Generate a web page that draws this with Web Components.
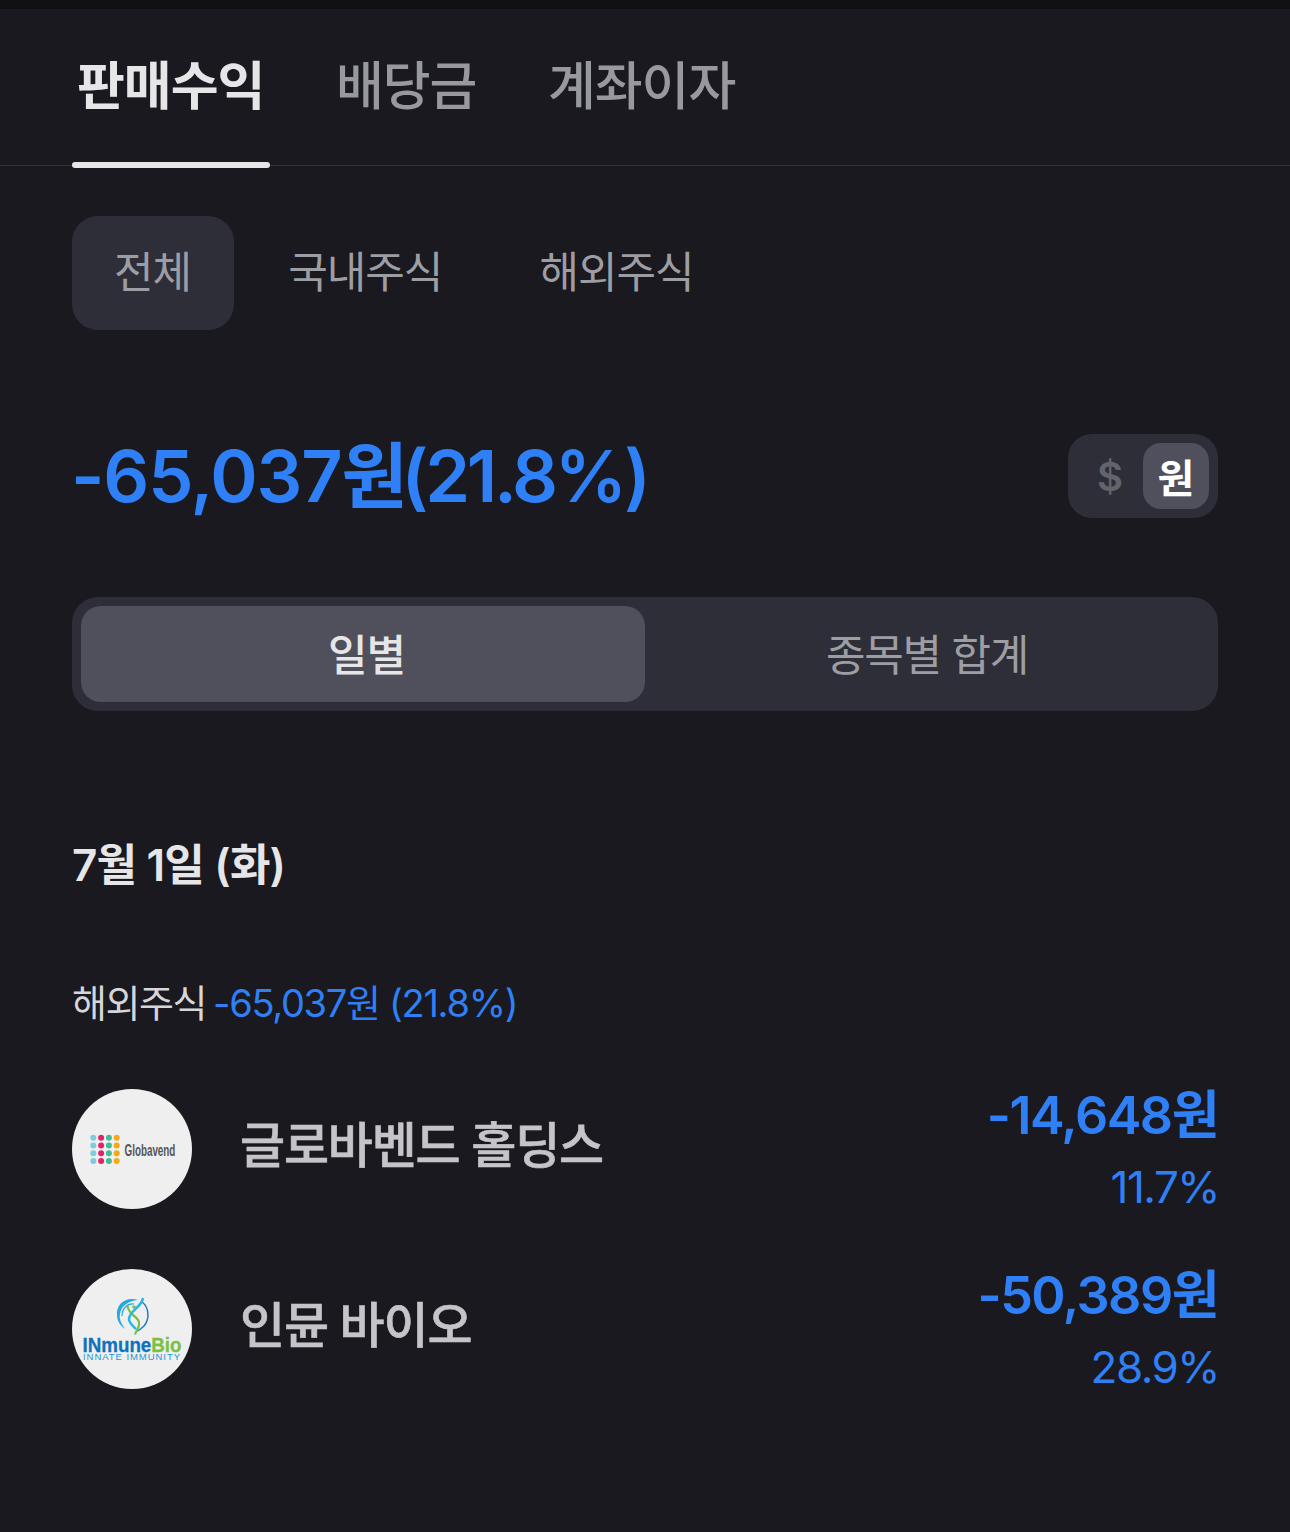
<!DOCTYPE html>
<html lang="ko">
<head>
<meta charset="utf-8">
<style>
  html, body { margin: 0; background: #19191f; }
  body {
    width: 1290px;
    height: 1532px;
    overflow: hidden;
    font-family: Inter, "Noto Sans CJK KR", sans-serif;
    --blue: #2f80f6;
  }
  .content { padding: 0 72px; display: block; }
</style>
</head>
<body>
<top-tabs></top-tabs>
<div class="content">
  <market-filter></market-filter>
  <profit-summary></profit-summary>
  <view-switch></view-switch>
  <day-section>
    <stock-row name="글로바벤드 홀딩스" amount="-14,648원" rate="11.7%" logo="globavend"></stock-row>
    <stock-row name="인뮨 바이오" amount="-50,389원" rate="28.9%" logo="inmune"></stock-row>
  </day-section>
</div>
<script>
class TopTabs extends HTMLElement {
  connectedCallback() {
    this.attachShadow({ mode: "open" }).innerHTML = `
      <style>
        :host { display: block; border-top: 9px solid #111114; }
        nav {
          display: flex;
          gap: 71.5px;
          height: 157px;
          padding: 0 77px;
          box-sizing: border-box;
          border-bottom: 1px solid #33333b;
        }
        a {
          position: relative;
          font-size: 52px;
          font-weight: 500;
          line-height: 150px;
          height: 150px;
          letter-spacing: -1px;
          color: #98989f;
        }
        a span { position: relative; top: 3px; }
        a.on { color: #e6e6e9; font-weight: 700; }
        a.on::after {
          content: "";
          position: absolute;
          left: -5px;
          right: -6px;
          top: 153px;
          height: 6px;
          border-radius: 3px;
          background: #e6e6e9;
        }
      </style>
      <nav>
        <a class="on"><span>판매수익</span></a>
        <a><span>배당금</span></a>
        <a><span>계좌이자</span></a>
      </nav>`;
  }
}

class MarketFilter extends HTMLElement {
  connectedCallback() {
    this.attachShadow({ mode: "open" }).innerHTML = `
      <style>
        :host { display: flex; gap: 12px; margin-top: 50px; }
        span {
          height: 114px;
          box-sizing: border-box;
          padding: 0 43px 8px 42px;
          display: flex;
          align-items: center;
          border-radius: 26px;
          font-size: 43px;
          letter-spacing: -1px;
          color: #9d9da4;
        }
        span.on { background: #2e2e38; }
      </style>
      <span class="on">전체</span><span>국내주식</span><span>해외주식</span>`;
  }
}

class ProfitSummary extends HTMLElement {
  connectedCallback() {
    this.attachShadow({ mode: "open" }).innerHTML = `
      <style>
        :host {
          display: flex;
          align-items: center;
          justify-content: space-between;
          margin-top: 104px;
          height: 84px;
        }
        strong {
          margin: 0 0 12px -1px;
          font-size: 72px;
          font-weight: 600;
          letter-spacing: -1.2px;
          color: var(--blue);
        }
        strong i { font-style: normal; letter-spacing: -3.2px; margin-left: -5px; }
        .unit {
          width: 150px;
          height: 84px;
          box-sizing: border-box;
          padding: 9px;
          display: flex;
          justify-content: flex-end;
          gap: 9px;
          border-radius: 24px;
          background: #2e2e38;
        }
        .unit b {
          display: flex;
          align-items: center;
          justify-content: center;
          height: 66px;
          font-size: 40px;
          font-weight: 600;
        }
        .usd { color: #63636c; width: 48px; }
        .krw { color: #fff; width: 66px; border-radius: 18px; background: #50505c; }
      </style>
      <strong>-65,037원<i>(21.8%)</i></strong>
      <div class="unit"><b class="usd">$</b><b class="krw">원</b></div>`;
  }
}

class ViewSwitch extends HTMLElement {
  connectedCallback() {
    this.attachShadow({ mode: "open" }).innerHTML = `
      <style>
        :host {
          display: grid;
          grid-template-columns: 1fr 1fr;
          margin-top: 79px;
          height: 114px;
          box-sizing: border-box;
          padding: 9px;
          border-radius: 26px;
          background: #2e2e38;
        }
        span {
          display: flex;
          align-items: center;
          justify-content: center;
          padding-bottom: 4px;
          border-radius: 20px;
          font-size: 43px;
          letter-spacing: -1.3px;
          color: #9d9da4;
        }
        span.on { background: #50505c; color: #e6e6e9; font-weight: 500; padding-left: 7px; letter-spacing: -1px; }
      </style>
      <span class="on">일별</span><span>종목별 합계</span>`;
  }
}

class DaySection extends HTMLElement {
  connectedCallback() {
    this.attachShadow({ mode: "open" }).innerHTML = `
      <style>
        :host { display: block; margin-top: 124px; }
        h2 {
          margin: 0;
          height: 60px;
          line-height: 60px;
          font-size: 44px;
          font-weight: 600;
          letter-spacing: -0.8px;
          color: #e6e6e9;
        }
        p {
          margin: 80px 0 0;
          height: 56px;
          line-height: 56px;
          font-size: 38px;
          letter-spacing: -1.5px;
          color: #d6d6da;
        }
        p span { color: var(--blue); letter-spacing: -1.3px; margin-left: -2px; }
        .rows { display: flex; flex-direction: column; gap: 60px; margin-top: 58px; }
      </style>
      <h2>7월 1일 (화)</h2>
      <p>해외주식 <span>-65,037원 (21.8%)</span></p>
      <div class="rows"><slot></slot></div>`;
  }
}

const LOGOS = {
  globavend: () => {
    const cols = ["#79cfe0", "#e5206c", "#43bd97", "#f2ab14"];
    let dots = "";
    for (let c = 0; c < 4; c++)
      for (let r = 0; r < 4; r++)
        dots += `<circle cx="${21.3 + c * 7.8}" cy="${48.7 + r * 7.8}" r="3" fill="${cols[c]}"/>`;
    return `<svg viewBox="0 0 120 120" width="120" height="120">${dots}
      <text transform="translate(52.500 67) scale(.58 1)" font-family="Liberation Sans" font-size="17" font-weight="700" fill="#555">Globavend</text></svg>`;
  },
  inmune: () => `<svg viewBox="0 0 120 120" width="120" height="120">
      <path d="M66 31C52 27 44 37 45 46C45 52 48 56 53 60C49 54 47 50 48 45C49 37 56 32 66 31Z" fill="#27a9e0"/>
      <path d="M62 35C55 34 50 40 50 47" fill="none" stroke="#27a9e0" stroke-width="1.200"/>
      <path d="M70 33C77 38 78 50 72 57C70 59 68 61 65 62" fill="none" stroke="#1f7cc4" stroke-width="1.500"/>
      <path d="M55.500 36.500C56 42 59 44 61 46C65 49 68 52 67 56C66.500 60 64 62 63 65.500" fill="none" stroke="#79c143" stroke-width="2.200"/>
      <circle cx="62" cy="38" r="1.800" fill="#79c143"/>
      <path d="M71 29C70 38 57 42 57 50C57 54 60 56 64 60" fill="none" stroke="#2cb5e5" stroke-width="2.500"/>
      <text x="60" y="82.500" text-anchor="middle" font-family="Liberation Sans" font-size="20" font-weight="700" textLength="99" lengthAdjust="spacingAndGlyphs" fill="#0f72bd" stroke="#0f72bd" stroke-width=".3">INmune<tspan fill="#79c143" stroke="#79c143">Bio</tspan></text>
      <text x="59.500" y="91" text-anchor="middle" font-family="Liberation Sans" font-size="9.500" fill="#2496d8" textLength="97" lengthAdjust="spacing">INNATE IMMUNITY</text>
    </svg>`,
};

class StockRow extends HTMLElement {
  connectedCallback() {
    const logo = LOGOS[this.getAttribute("logo")]();
    this.attachShadow({ mode: "open" }).innerHTML = `
      <style>
        :host { display: flex; align-items: center; height: 120px; }
        .logo {
          width: 120px;
          height: 120px;
          border-radius: 50%;
          overflow: hidden;
          background: #efefef;
          flex: none;
        }
        .logo svg { display: block; }
        .name {
          flex: 1;
          margin-left: 48px;
          padding-bottom: 16px;
          font-size: 49px;
          font-weight: 500;
          letter-spacing: -1.2px;
          color: #c4c4c9;
          -webkit-text-stroke: 0.6px #c4c4c9;
        }
        .nums { text-align: right; color: var(--blue); padding-top: 4px; }
        .amount { font-size: 52px; font-weight: 600; letter-spacing: -1.5px; line-height: 70px; }
        .rate { font-size: 44px; letter-spacing: -1.5px; line-height: 70px; margin: 1px -1px 0 0; }
      </style>
      <div class="logo">${logo}</div>
      <div class="name">${this.getAttribute("name")}</div>
      <div class="nums">
        <div class="amount">${this.getAttribute("amount")}</div>
        <div class="rate">${this.getAttribute("rate")}</div>
      </div>`;
  }
}

customElements.define("top-tabs", TopTabs);
customElements.define("market-filter", MarketFilter);
customElements.define("profit-summary", ProfitSummary);
customElements.define("view-switch", ViewSwitch);
customElements.define("day-section", DaySection);
customElements.define("stock-row", StockRow);
</script>
</body>
</html>
